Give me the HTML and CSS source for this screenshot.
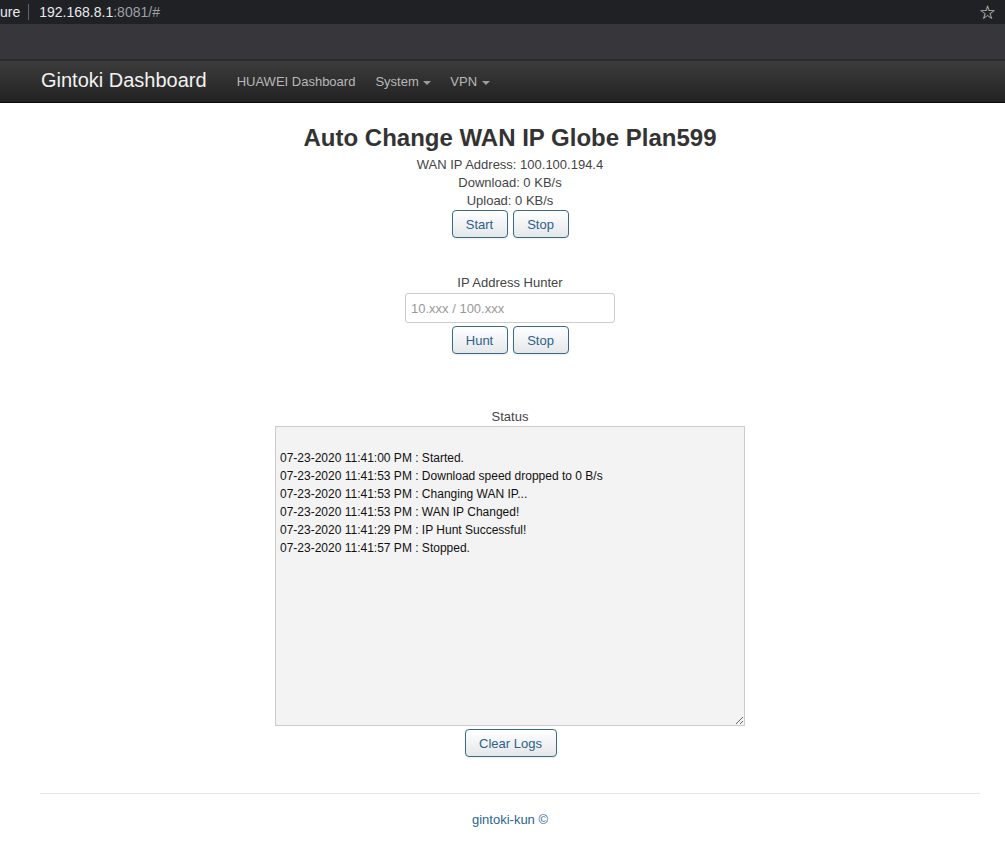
FILE: index.html
```html
<!DOCTYPE html>
<html lang="en">
<head>
    <meta charset="utf-8">
    <title>Gintoki Dashboard</title>
    <link rel="stylesheet" href="styles.css">
</head>
<body>
    <div class="chrome-url">
        <span class="url-sec">ure</span>
        <span class="url-host">192.168.8.1<span class="url-rest">:8081/#</span></span>
        <span class="url-star">&#9734;</span>
    </div>
    <div class="chrome-bar"></div>

    <nav class="navbar">
        <a class="brand" href="#">Gintoki Dashboard</a>
        <ul class="nav">
            <li><a href="#">HUAWEI Dashboard</a></li>
            <li><a href="#">System <span class="caret"></span></a></li>
            <li><a href="#">VPN <span class="caret"></span></a></li>
        </ul>
    </nav>

    <div class="container">
        <h2 class="title">Auto Change WAN IP Globe Plan599</h2>
        <div class="info">WAN IP Address: 100.100.194.4</div>
        <div class="info">Download: 0 KB/s</div>
        <div class="info">Upload: 0 KB/s</div>
        <div class="btns">
            <button class="btn">Start</button>
            <button class="btn">Stop</button>
        </div>

        <div class="hunter">
            <label class="label">IP Address Hunter</label>
            <input type="text" class="ip-input" placeholder="10.xxx / 100.xxx">
            <div class="btns">
                <button class="btn">Hunt</button>
                <button class="btn">Stop</button>
            </div>
        </div>

        <div class="status">
            <label class="label">Status</label>
            <textarea class="logs">
07-23-2020 11:41:00 PM : Started.
07-23-2020 11:41:53 PM : Download speed dropped to 0 B/s
07-23-2020 11:41:53 PM : Changing WAN IP...
07-23-2020 11:41:53 PM : WAN IP Changed!
07-23-2020 11:41:29 PM : IP Hunt Successful!
07-23-2020 11:41:57 PM : Stopped.</textarea>
            <div class="btns">
                <button class="btn btn-wide">Clear Logs</button>
            </div>
        </div>

        <hr class="rule">
        <footer class="footer">gintoki-kun &copy;</footer>
    </div>
</body>
</html>
```

FILE: styles.css
```css
body {
    margin: 0;
    font-family: "Liberation Sans", Arial, sans-serif;
    font-size: 13px;
    color: #333;
    background: #fff;
}

.chrome-url {
    height: 24px;
    background: #202124;
    display: flex;
    align-items: center;
    color: #e8eaed;
    font-size: 14px;
}

.url-sec {
    padding-right: 8px;
    border-right: 1px solid #5f6368;
    line-height: 16px;
}

.url-host {
    padding-left: 10px;
    flex: 1;
}

.url-rest {
    color: #9aa0a6;
}

.url-star {
    color: #e8eaed;
    font-size: 19px;
    margin-right: 9px;
}

.chrome-bar {
    height: 35px;
    background: #36363b;
    border-bottom: 2px solid #2b2b2e;
}

.navbar {
    height: 41px;
    background: linear-gradient(to bottom, #3c3c3c, #222);
    border-bottom: 1px solid #0a0a0a;
    display: flex;
    align-items: center;
    padding-left: 41px;
}

.brand {
    color: #f2f2f2;
    font-size: 20px;
    text-decoration: none;
    margin-right: 30px;
    position: relative;
    top: -1px;
}

.nav {
    list-style: none;
    margin: 0;
    padding: 0;
    display: flex;
    gap: 20px;
}

.nav li:last-child {
    margin-left: -1px;
}

.nav a {
    color: #b8b8b8;
    text-decoration: none;
    font-size: 13px;
}

.caret {
    display: inline-block;
    width: 0;
    height: 0;
    border-top: 4px solid #9d9d9d;
    border-left: 4px solid transparent;
    border-right: 4px solid transparent;
    vertical-align: middle;
    margin-left: 1px;
}

.container {
    display: flex;
    flex-direction: column;
    align-items: center;
    padding: 0 25px 0 40px;
}

.title {
    font-size: 24px;
    font-weight: bold;
    margin: 20px 0 3px;
    line-height: 30px;
}

.info {
    line-height: 18px;
    color: #444;
}

.btns {
    display: flex;
    gap: 5px;
    justify-content: center;
}

.btn {
    font-family: "Liberation Sans", Arial, sans-serif;
    font-size: 13px;
    color: #2d6189;
    height: 28px;
    width: 56px;
    padding: 0;
    border: 1px solid #3b6a83;
    border-radius: 4px;
    background: linear-gradient(to bottom, #fff, #e4e7ea);
    box-shadow: 0 1px 2px rgba(0, 0, 0, 0.08);
}

.btn-wide {
    width: 92px;
    margin-left: 1px;
}

.hunter {
    display: flex;
    flex-direction: column;
    align-items: center;
    margin-top: 36px;
}

.label {
    line-height: 18px;
    color: #444;
}

.ip-input {
    width: 210px;
    height: 30px;
    box-sizing: border-box;
    border: 1px solid #ccc;
    border-radius: 3px;
    margin: 1px 0 3px;
    padding: 0 5px;
    font-family: "Liberation Sans", Arial, sans-serif;
    font-size: 13px;
}

.ip-input::placeholder {
    color: #999;
}

.status {
    display: flex;
    flex-direction: column;
    align-items: center;
    margin-top: 54px;
}

.logs {
    width: 470px;
    height: 300px;
    box-sizing: border-box;
    margin: 0 0 3px;
    padding: 22px 4px 4px;
    background: #f3f3f3;
    border: 1px solid #ccc;
    font-family: "Liberation Sans", Arial, sans-serif;
    font-size: 12px;
    line-height: 18px;
    color: #111;
}

.rule {
    width: 940px;
    border: 0;
    border-top: 1px solid #e6e6e6;
    margin: 36px 0 0;
}

.footer {
    color: #2a6496;
    margin-top: 18px;
}
```
